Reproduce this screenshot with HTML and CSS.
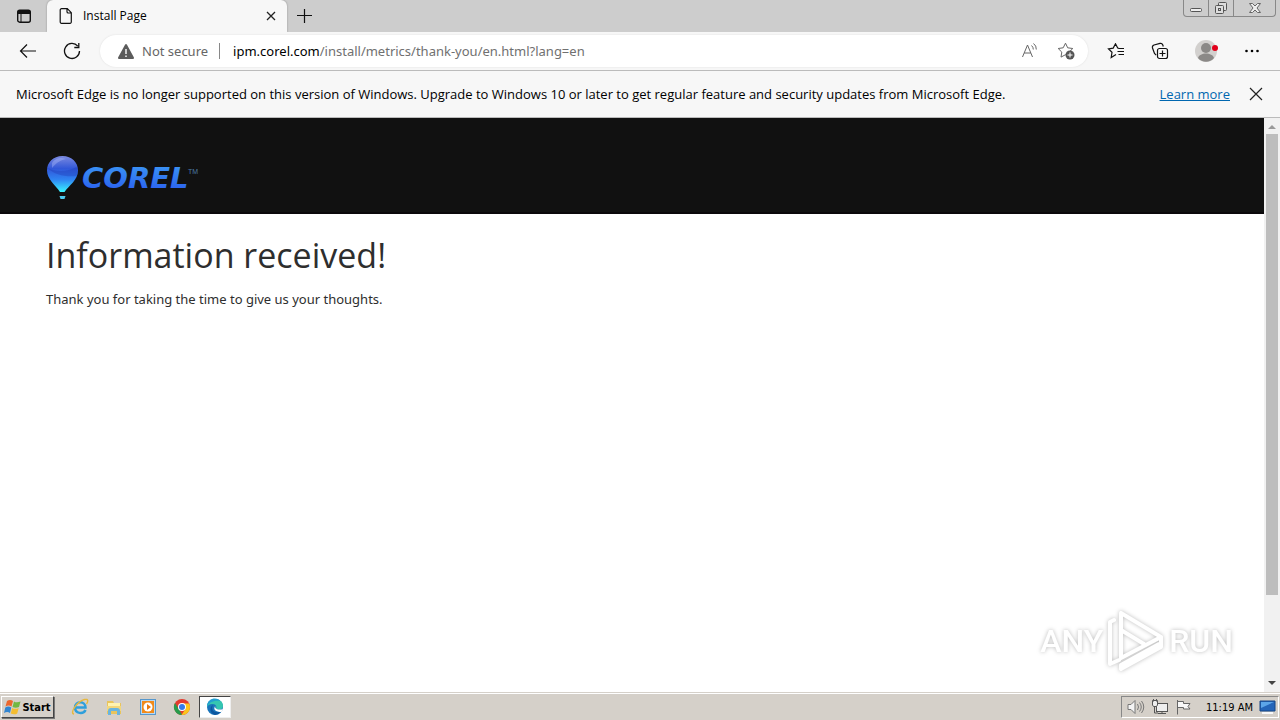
FILE: index.html
```
<!DOCTYPE html>
<html lang="en">
<head>
<meta charset="utf-8">
<title>Install Page</title>
<link rel="stylesheet" href="styles.css">
</head>
<body>
<div class="desktop">
  <header class="tabstrip">
    <button class="tab-actions" aria-label="Tab actions">
      <svg width="16" height="16" viewBox="0 0 16 16"><rect x="1.7" y="2.2" width="12.6" height="12" rx="2" fill="none" stroke="#111" stroke-width="1.4"/><path d="M1.5 6V4a2 2 0 0 1 2-2h9a2 2 0 0 1 2 2v2z" fill="#111"/><path d="M5 6v8" stroke="#111"/></svg>
    </button>
    <div class="tab">
      <svg width="14" height="16" viewBox="0 0 14 16" fill="none" stroke="#111" stroke-width="1.2"><path d="M2.5.7h5.8l4 4v9.2a1.3 1.3 0 0 1-1.3 1.4H2.5a1.3 1.3 0 0 1-1.3-1.4V2A1.3 1.3 0 0 1 2.500.7zM8 .7v3a1.3 1.3 0 0 0 1.300 1.300h3"/></svg>
      <span class="tab-title">Install Page</span>
      <button class="tab-close" aria-label="Close tab"><svg width="10" height="10" viewBox="0 0 10 10"><path d="M1 1l8 8M9 1L1 9" stroke="#222" stroke-width="1.3"/></svg></button>
    </div>
    <button class="new-tab" aria-label="New tab"><svg width="16" height="16" viewBox="0 0 16 16"><path d="M8.500 1v14M1 7.500h15" stroke="#111" stroke-width="1.2"/></svg></button>
    <div class="window-buttons">
      <button class="win" aria-label="Minimize"><svg width="14" height="14" viewBox="0 0 14 14"><rect x="1.500" y="7.500" width="11" height="3" rx="1" fill="#eee" stroke="#555"/></svg></button>
      <button class="win" aria-label="Restore"><svg width="14" height="14" viewBox="0 0 14 14" fill="#ddd" stroke="#555"><rect x="4.500" y="1.500" width="8" height="8" rx="1"/><rect x="1.500" y="4.500" width="8" height="8" rx="1"/><rect x="4.500" y="7.500" width="2" height="2"/></svg></button>
      <button class="win wide" aria-label="Close"><svg width="14" height="12" viewBox="0 0 14 12"><path d="M1.500 1.500h3L7 4l2.500-2.500h3L9 6l3.500 4.500h-3L7 8l-2.500 2.500h-3L5 6z" fill="#eee" stroke="#666"/></svg></button>
    </div>
  </header>

  <nav class="toolbar">
    <button class="tool" aria-label="Back"><svg width="18" height="16" viewBox="0 0 18 16" fill="none" stroke="#111" stroke-width="1.2"><path d="M8 1.500L1.500 8 8 14.500M1.500 8H17"/></svg></button>
    <button class="tool" aria-label="Refresh"><svg width="18" height="18" viewBox="0 0 18 18" fill="none" stroke="#111" stroke-width="1.3"><path d="M16.500 9A7.500 7.500 0 1 1 14.800 4.200M15.800 1v4.500h-4.500"/></svg></button>
    <div class="address">
      <svg width="16" height="15" viewBox="0 0 16 15"><path d="M7 .8a1.200 1.200 0 0 1 2 0l6.800 12.400a1.200 1.200 0 0 1-1 1.800H1.200a1.200 1.200 0 0 1-1-1.800z" fill="#5c5c5c"/><path d="M8 5v5M8 11.500v1.500" stroke="#fff" stroke-width="1.400"/></svg>
      <span class="insecure">Not secure</span>
      <span class="url"><span class="host">ipm.corel.com</span>/install/metrics/thank-you/en.html?lang=en</span>
      <button class="icon" aria-label="Read aloud"><svg width="18" height="16" viewBox="0 0 18 16" fill="none" stroke="#666"><path d="M1.500 14L6.500 2 11.500 14M3.200 10h6.600M10.500 2.500a5 5 0 0 1 1.800 4M12.500 .5a7 7 0 0 1 2.800 6"/></svg></button>
      <button class="icon" aria-label="Add to favorites"><svg width="18" height="18" viewBox="0 0 18 18"><path d="M8.500 1.200l2.200 4.600 5.100.7-3.700 3.600.8 5-4.400-2.400L4 15.100l.8-5L1.200 6.500l5-.7z" fill="none" stroke="#666"/><circle cx="13" cy="13" r="4.500" fill="#555"/><path d="M13 10.500v5M10.500 13h5" stroke="#fff"/></svg></button>
    </div>
    <button class="tool" aria-label="Favorites"><svg width="18" height="16" viewBox="0 0 18 16" fill="none" stroke="#111" stroke-width="1.200"><path d="M9 11.500L4.200 14.500l.8-5.200L1.500 5.800l4.700-.7L8.500.8l2.200 4.200 1.300.3M11.500 5.500h5.500M10.500 8.500h6.500M11.500 11.500h5.500"/></svg></button>
    <button class="tool" aria-label="Collections"><svg width="18" height="18" viewBox="0 0 18 18" fill="none" stroke="#111" stroke-width="1.200"><rect x="6.500" y="6.500" width="10" height="10" rx="2"/><path d="M11.500 8.500v6M8.500 11.500h6M5.200 13.200L3.500 11.500 1.500 6A2.500 2.500 0 0 1 3 3L9 1.400a2.300 2.300 0 0 1 2.700 1.300l.6 1.800"/></svg></button>
    <button class="tool profile" aria-label="Profile"><svg width="24" height="24" viewBox="0 0 24 24"><circle cx="12" cy="12" r="11" fill="#d2d0ce"/><circle cx="12" cy="9" r="5" fill="#8b8987"/><path d="M4 19c1.500-6 14.500-6 16 0-4 5-12 5-16 0z" fill="#8b8987"/><circle cx="21" cy="9" r="3" fill="#e2001a"/></svg></button>
    <button class="tool" aria-label="Settings and more"><svg width="16" height="4" viewBox="0 0 16 4"><circle cx="2.500" cy="2" r="1.300"/><circle cx="8" cy="2" r="1.300"/><circle cx="13.500" cy="2" r="1.300"/></svg></button>
  </nav>

  <div class="notice">
    <span class="notice-text">Microsoft Edge is no longer supported on this version of Windows. Upgrade to Windows 10 or later to get regular feature and security updates from Microsoft Edge.</span>
    <a class="learn" href="#">Learn more</a>
    <button class="dismiss" aria-label="Dismiss"><svg width="14" height="14" viewBox="0 0 14 14"><path d="M1 1l12 12M13 1L1 13" stroke="#222" stroke-width="1.200"/></svg></button>
  </div>

  <div class="viewport">
    <main class="page">
      <div class="banner">
        <svg width="154" height="48" viewBox="0 0 154 48" role="img" aria-label="Corel">
          <defs>
            <linearGradient id="balloon" x1="0" y1="0" x2="0" y2="1"><stop offset="0" stop-color="#7b8ae0"/><stop offset=".35" stop-color="#3157d8"/><stop offset=".65" stop-color="#2f83f2"/><stop offset="1" stop-color="#39f5ff"/></linearGradient>
            <linearGradient id="word" x1="0" y1="0" x2="0" y2="1"><stop offset="0" stop-color="#3d9cf5"/><stop offset="1" stop-color="#2858ee"/></linearGradient>
          </defs>
          <path d="M16.500 2C7 2 1 8.500 1 16.500c0 9 9 15 13 21.500h4.500C23 31.500 32 26 32 16.500 32 8.500 26 2 16.500 2z" fill="url(#balloon)"/>
          <path d="M1.500 14c7 7 18 9 29 8 2-5 1-7 0-9C21 18 10 18 1.500 14z" fill="#203fb8" opacity=".4"/>
          <path d="M6 9c3-5 9-6 14-4-5 1-9 3-14 9z" fill="#bcc8ff" opacity=".35"/>
          <path d="M13.500 42h6l-1 3h-4z" fill="#4cc9ef"/>
          <text x="36" y="34" class="logo-word" fill="url(#word)">COREL</text>
          <text x="142" y="20" class="logo-tm">TM</text>
        </svg>
      </div>
      <div class="message">
        <h1>Information received!</h1>
        <p>Thank you for taking the time to give us your thoughts.</p>
      </div>
    </main>
    <div class="scrollbar">
      <svg width="8" height="4" viewBox="0 0 8 4"><path d="M4 0l4 4H0z" fill="#999"/></svg>
      <div class="track"><div class="thumb"></div></div>
      <svg width="8" height="4" viewBox="0 0 8 4"><path d="M4 4l4-4H0z" fill="#444"/></svg>
    </div>
    <div class="watermark">
      <span>ANY</span>
      <svg width="58" height="64" viewBox="0 0 58 64" fill="none" stroke="#fff" stroke-width="4" stroke-linejoin="round" stroke-linecap="round"><path d="M37 35L14 21V49L54 28 14 4v17M7 11l-4 2v42l9-4M14 60l40-22v-10M14 60v-4l38-21"/></svg>
      <span>RUN</span>
    </div>
  </div>

  <footer class="taskbar">
    <button class="start"><svg width="17" height="16" viewBox="0 0 17 16"><path d="M3 2c2-1.500 4-1.500 6 0L7.500 7.500c-2-1.500-4-1.300-6 0z" fill="#ed672d"/><path d="M10 2.500c2 1.200 4 1 6.500 0L15 8c-2 1-4.500 1-6.500 0z" fill="#72b843"/><path d="M1.300 8.500c2-1.300 4-1.300 6 0L6 14c-2-1.500-4-1.200-6 0z" fill="#3285d1"/><path d="M8.200 9c2 1.300 4.500 1 6.500 0l-1.500 5.500c-2 1.200-4.500 1-6.500 0z" fill="#f4bd31"/></svg>Start</button>
    <div class="launchers">
      <button class="launch" aria-label="Internet Explorer"><svg width="18" height="18" viewBox="0 0 18 18" fill="none"><path d="M14.500 12c-2 4.500-10.500 4-10.500-2.500C4 2.500 14.500 2.500 14.500 9.500H5" stroke="#2f9fdb" stroke-width="2.500"/><path d="M3 16C-2 15 7 3 13.500 1.500 18 .5 17 4 15.500 6" stroke="#e7b83d" stroke-width="1.400"/></svg></button>
      <button class="launch" aria-label="File Explorer"><svg width="18" height="18" viewBox="0 0 18 18"><path d="M2 3h6l1 2h7v11H2z" fill="#e9c45c"/><path d="M3 5h12v4H3z" fill="#fff3b0"/><path d="M2 8h14v5H2z" fill="#f3d77b"/><path d="M3 17v-4q0-3 3-3h6q3 0 3 3v4h-3v-4H6v4z" fill="#69b4df"/></svg></button>
      <button class="launch" aria-label="Media Player"><svg width="18" height="18" viewBox="0 0 18 18"><rect x="1.500" y="1.500" width="15" height="15" fill="#b7d9f4" stroke="#5697cc"/><rect x="3" y="3" width="12" height="12" fill="#f28a19"/><circle cx="9" cy="9" r="4.500" fill="#fff"/><path d="M8 6l4 3-4 3z" fill="#e9780c"/></svg></button>
      <button class="launch" aria-label="Chrome"><svg width="18" height="18" viewBox="0 0 18 18"><circle cx="9" cy="9" r="8" fill="#e33b2e"/><path d="M2 5l5 8 2 4A8 8 0 0 1 2 5z" fill="#279b4c"/><path d="M9 5.500h7.200A8 8 0 0 1 8.500 17l4-6z" fill="#fbc51b"/><circle cx="9" cy="9" r="4" fill="#fff"/><circle cx="9" cy="9" r="3" fill="#347bea"/></svg></button>
      <button class="launch active" aria-label="Microsoft Edge"><svg width="18" height="18" viewBox="0 0 18 18"><circle cx="9" cy="9" r="8" fill="#1974ba"/><path d="M1 9C1-1 17-1 17 8c0 4-5 4-7 2.500 1-1.500 0-4.500-3.500-4.500C3.500 6 1.500 7.500 1 9z" fill="#35c6b1"/><path d="M1 9C1-1 12-1 14.500 3 8 2 3 4 1 9z" fill="#229fd0"/><path d="M7 7c-3 5 2 9 8 6.500A8 8 0 0 1 9 17C4 16 3 9 7 7z" fill="#0d569f"/><path d="M9.500 7.500c-1.500 3 2 5 7.500 3.500l-1.500 3c-6 0-9-2.500-6-6.500z" fill="#fff"/></svg></button>
    </div>
    <div class="tray">
      <svg width="18" height="16" viewBox="0 0 18 16" fill="#f4f4f4" stroke="#777"><path d="M1 5.500h3l4-4v13l-4-4H1z"/><path d="M10.500 5q2 3 0 6M12.500 3.500q3.500 4.500 0 9M14.500 2q4.500 6 0 12" fill="none"/></svg>
      <svg width="18" height="16" viewBox="0 0 18 16" fill="#eee" stroke="#555"><rect x="5.500" y="4.500" width="11" height="8"/><path d="M7 14.500h8M11 12.500v2M3.500 6v8H7" fill="none"/><path d="M1.500 1.500h5V6l-1 1.500h-3L1.500 6zM2.500 0v2.500M5.500 0v2.500"/></svg>
      <svg width="18" height="16" viewBox="0 0 18 16" fill="#f8f8f8" stroke="#666"><path d="M2.500 1v14.500M2.500 2.500h6v2h6.500l-2 3 2 2.500H8.500V8.500h-6z"/></svg>
      <time class="clock">11:19 AM</time>
      <svg width="17" height="16" viewBox="0 0 17 16"><path d="M1 2h15v10H1z" fill="#2465b9" stroke="#164785"/><path d="M2 3h13L2 9z" fill="#5ca5e9"/><path d="M3 14h11" stroke="#f8f8f8" stroke-width="2"/></svg>
    </div>
  </footer>
</div>
</body>
</html>
```
FILE: styles.css
```
* { box-sizing: border-box; }
body { margin: 0; font-family: "Noto Sans", "Open Sans", sans-serif; font-size: 13px; color: #000; }
button { border: 0; padding: 0; background: none; font: inherit; color: inherit; display: flex; align-items: center; justify-content: center; }
svg { display: block; flex: none; }
.desktop { height: 100vh; display: flex; flex-direction: column; overflow: hidden; background: #fff; }

.tabstrip { height: 32px; flex: none; display: flex; background: #cdcdcd; }
.tab-actions { width: 47px; border-radius: 0 0 6px 0; }
.tab { width: 240px; display: flex; align-items: center; gap: 10px; padding: 0 10px 0 12px; background: #f7f7f7; border-radius: 6px 6px 0 0; box-shadow: 0 0 2px #888; clip-path: inset(0 -3px 0 -3px); }
.tab-title { flex: 1; font-family: "Open Sans", sans-serif; font-size: 12px; line-height: 16px; }
.tab-close { width: 12px; height: 12px; }
.new-tab { width: 34px; }
.window-buttons { margin-left: auto; margin-right: 4px; height: 17px; display: flex; border: 1px solid #888; border-top: 0; border-radius: 0 0 4px 4px; }
.win { width: 25px; border-right: 1px solid #888; }
.wide { width: 41px; border-right: 0; }

.toolbar { height: 39px; flex: none; display: flex; align-items: center; padding: 0 6px; background: #f7f7f7; border-bottom: 1px solid #bbb; }
.tool { width: 44px; height: 32px; flex: none; }
.profile { width: 48px; }
.address { flex: 1; min-width: 0; height: 32px; margin: 0 6px; padding: 0 4px 0 18px; display: flex; align-items: center; background: #fff; border-radius: 16px; box-shadow: 0 0 2px #ddd; }
.insecure { margin-left: 8px; padding-right: 11px; border-right: 1px solid #888; color: #666; line-height: 16px; }
.url { flex: 1; margin-left: 13px; color: #707070; white-space: nowrap; overflow: hidden; }
.host { color: #000; }
.icon { width: 36px; height: 28px; }

.notice { height: 47px; flex: none; display: flex; align-items: center; padding: 0 17px 0 16px; background: #f7f7f7; border-bottom: 1px solid #bbb; font-family: "Open Sans", sans-serif; font-size: 13px; line-height: 18px; white-space: nowrap; }
.notice-text { flex: 1; }
.learn { color: #0067b0; margin-right: 19px; }

.viewport { position: relative; flex: 1; min-height: 0; display: flex; }
.page { flex: 1; color: #2e2e2e; }
.banner { height: 96px; padding: 36px 46px 0; background: #111; border-bottom: 2px solid #0b080b; }
.logo-word { font: italic bold 29px "DejaVu Sans", sans-serif; }
.logo-tm { font: 7px "Liberation Sans", sans-serif; fill: #4b79a3; }
.message { padding: 16px 46px; }
h1 { margin: 0; font-family: "Open Sans", sans-serif; font-size: 34px; line-height: 50px; font-weight: 400; }
p { margin: 9px 0 0; font-size: 13px; line-height: 20px; }
.scrollbar { width: 16px; display: flex; flex-direction: column; align-items: center; padding: 7px 2px; gap: 5px; background: #f1f1f1; }
.track { flex: 1; width: 100%; }
.thumb { height: 85%; background: #bdbdbd; }
.watermark { position: absolute; right: 47px; bottom: 19px; display: flex; align-items: center; gap: 4px; color: #fff; font: 500 32px/64px Roboto, sans-serif; filter: drop-shadow(0 0 2px #bbb); }

.taskbar { height: 28px; flex: none; display: flex; align-items: center; background: #d5d0c9; border-top: 1px solid #d5d0c9; box-shadow: inset 0 1px #fff; padding: 1px 1px 0; }
.start { height: 22px; width: 53px; gap: 1px; font-family: "DejaVu Sans Condensed", "DejaVu Sans", sans-serif; font-weight: bold; font-size: 11px; border: 1px solid; border-color: #fff #444 #444 #fff; box-shadow: 1px 1px #777; }
.launchers { display: flex; margin-left: 9px; }
.launch { width: 34px; height: 22px; }
.active { width: 32px; background: #fff; border: 1px solid; border-color: #444 #eee #eee #444; }
.tray { margin-left: auto; height: 22px; display: flex; align-items: center; gap: 6px; padding: 0 2px 0 5px; border: 1px solid; border-color: #888 #fff #fff #888; }
.clock { font: 11px "DejaVu Sans Condensed", sans-serif; margin-left: 7px; }
```
